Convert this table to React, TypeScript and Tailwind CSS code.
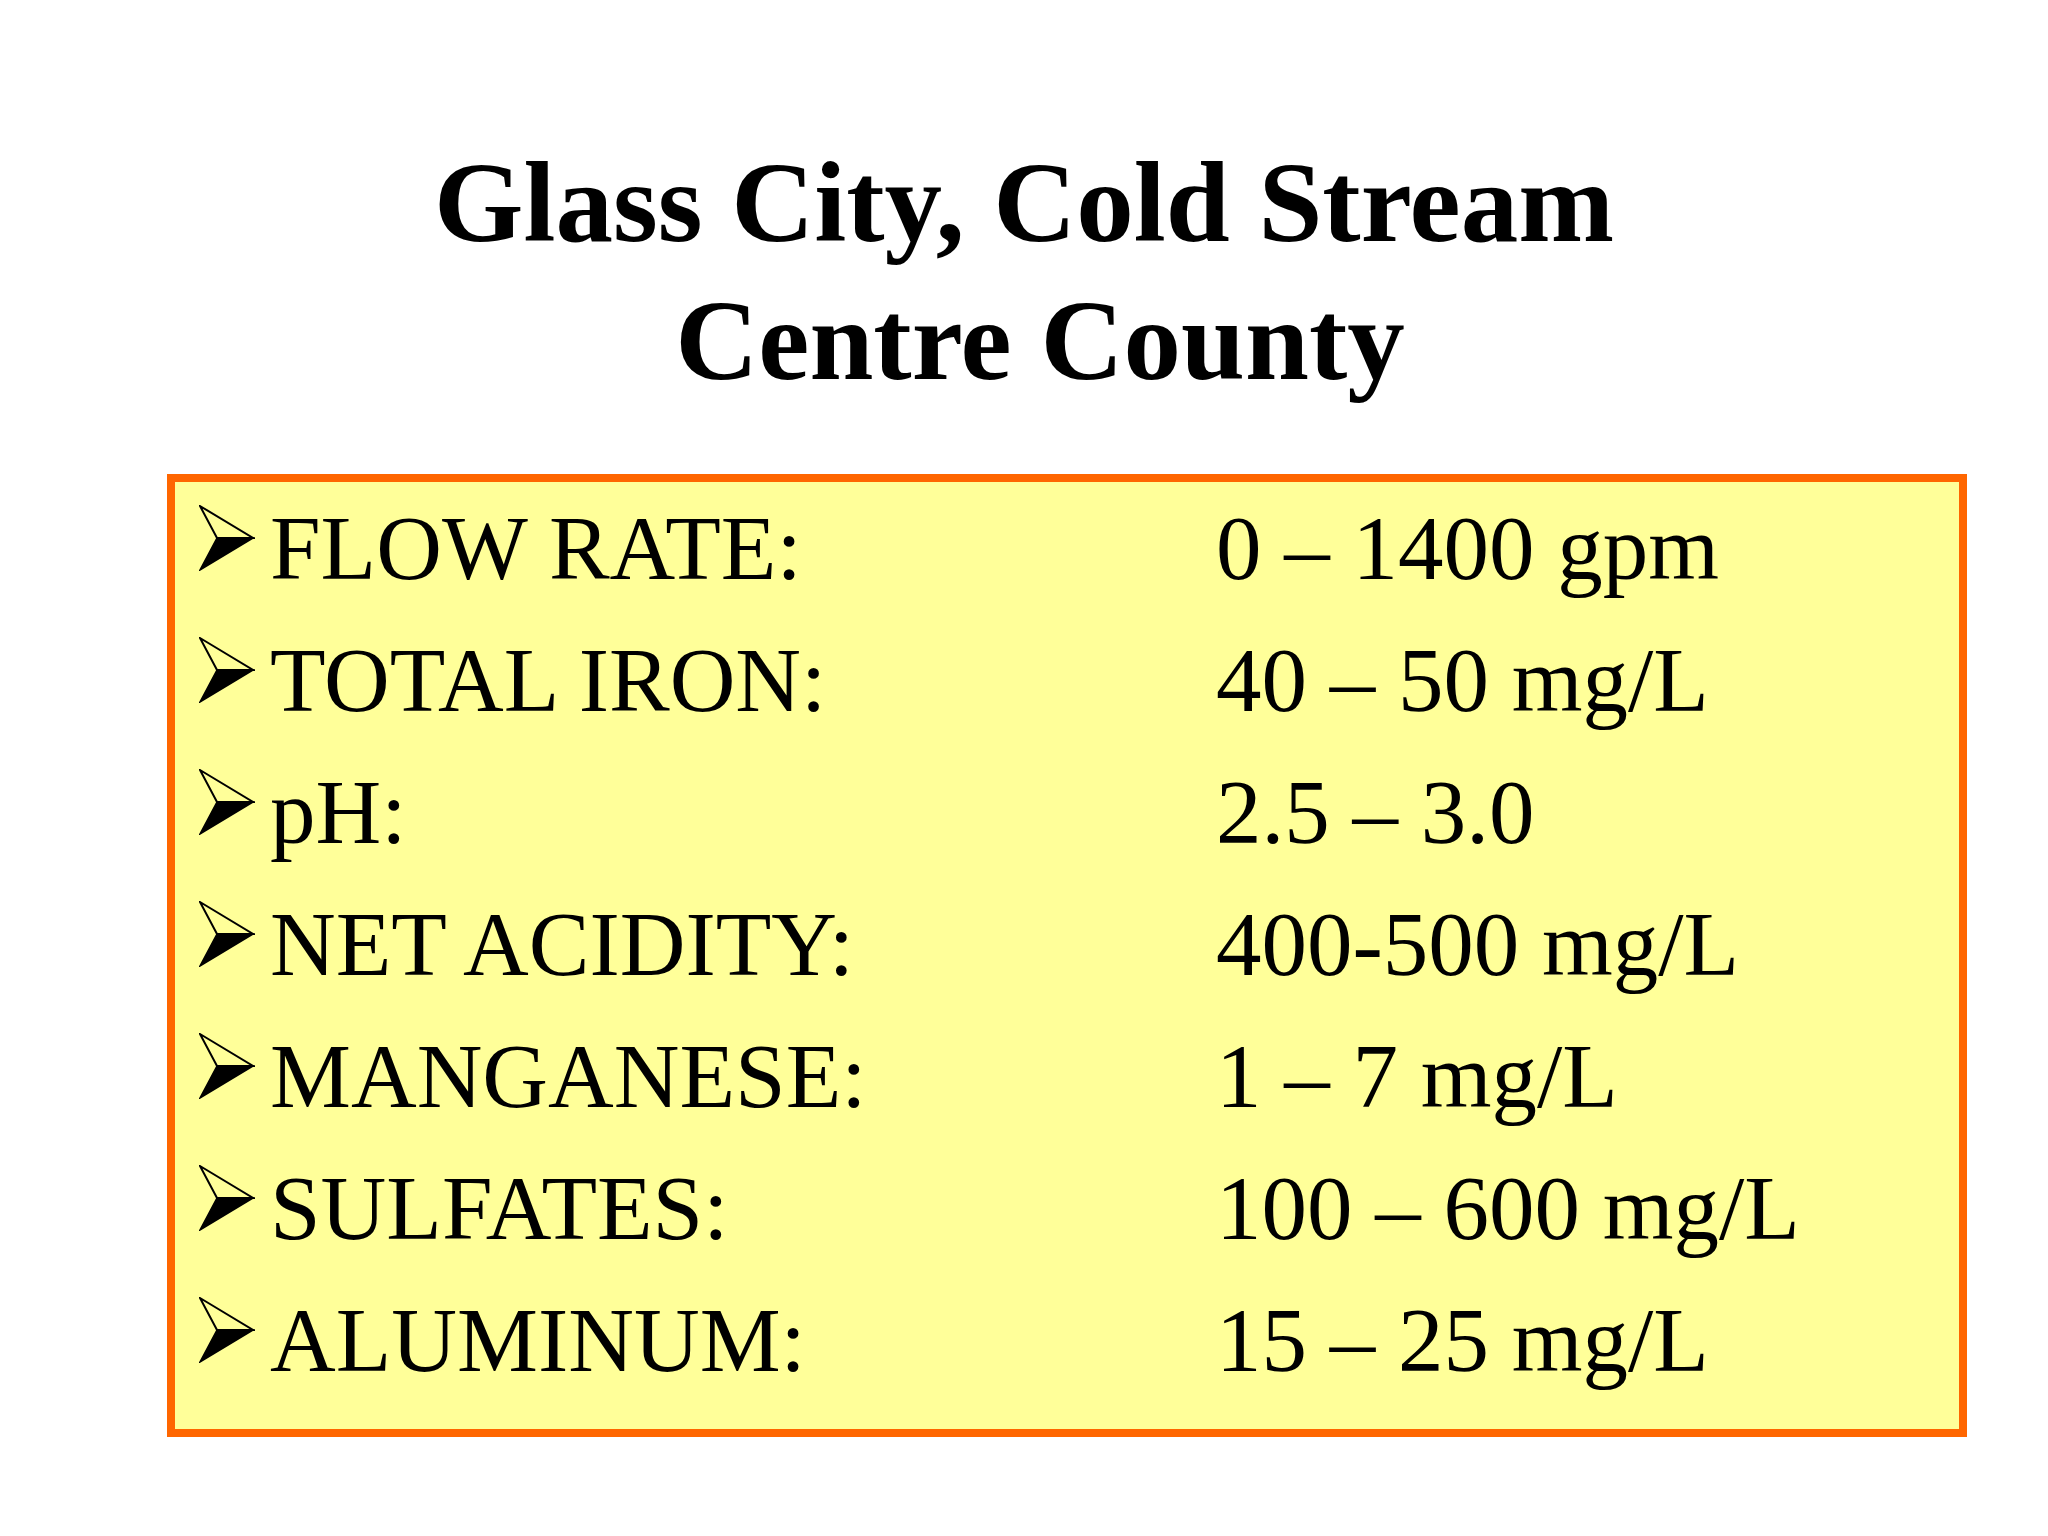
const rows = [
  { label: "FLOW RATE:", value: "0 – 1400 gpm" },
  { label: "TOTAL IRON:", value: "40 – 50 mg/L" },
  { label: "pH:", value: "2.5 – 3.0" },
  { label: "NET ACIDITY:", value: "400-500 mg/L" },
  { label: "MANGANESE:", value: "1 – 7 mg/L" },
  { label: "SULFATES:", value: "100 – 600 mg/L" },
  { label: "ALUMINUM:", value: "15 – 25 mg/L" },
];

const Arrow = () => (
  <svg width="56" height="66" viewBox="0 0 56 66" className="shrink-0 mt-[22px]">
    <polygon points="1,1 54,33 18,33" fill="none" stroke="#000" strokeWidth="2" strokeLinejoin="miter" />
    <polygon points="18,33 54,33 1,65" fill="#000" stroke="#000" strokeWidth="1.5" />
  </svg>
);

export default function App() {
  return (
    <div className="w-[2048px] h-[1536px] bg-white font-['Liberation_Serif','Times_New_Roman',serif] text-black pt-[134px]">
      <h1 className="text-center text-[115px] leading-[138px] font-bold">
        <span className="block">Glass City, Cold Stream</span>
        <span className="block pl-[32px]">Centre County</span>
      </h1>
      <div className="ml-[167px] mt-[64px] w-[1800px] h-[963px] border-[8px] border-[#ff6600] bg-[#ffff99] pl-[24px] pt-px">
        {rows.map((r) => (
          <div key={r.label} className="flex items-start h-[132px]">
            <Arrow />
            <div className="ml-[15px] w-[946px] text-[91px] leading-[132px] whitespace-nowrap">{r.label}</div>
            <div className="text-[91px] leading-[132px] whitespace-nowrap">{r.value}</div>
          </div>
        ))}
      </div>
    </div>
  );
}
